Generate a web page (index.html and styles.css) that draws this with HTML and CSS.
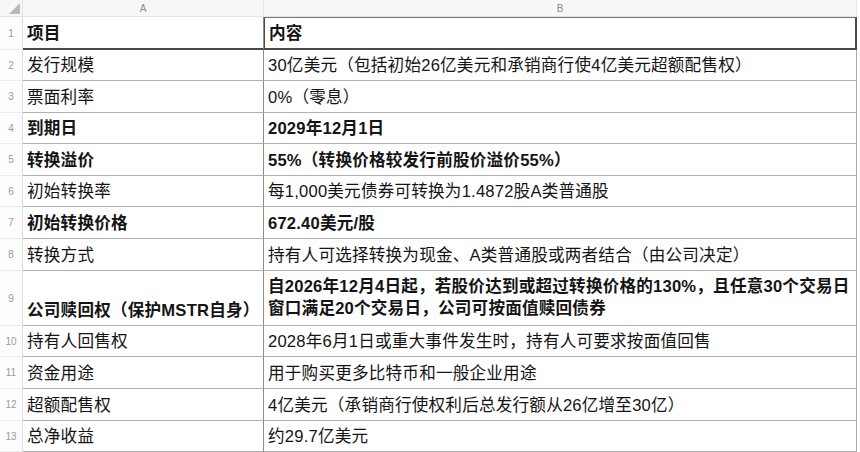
FILE: index.html
```html
<!DOCTYPE html>
<html lang="zh-CN">
<head>
<meta charset="utf-8">
<title>Sheet</title>
<link rel="stylesheet" href="styles.css">
</head>
<body>
<div class="sheet">
  <div class="hd corner"><svg class="tri" width="11" height="11" viewBox="0 0 11 11"><polygon points="11,0 11,11 0,11" fill="#b9b9b9"/></svg></div>
  <div class="hd col">A</div>
  <div class="hd col">B</div>

  <div class="num r1">1</div><div class="c a b1 bold">项目</div><div class="c sel bold">内容</div>
  <div class="num r2">2</div><div class="c a">发行规模</div><div class="c">30亿美元（包括初始26亿美元和承销商行使4亿美元超额配售权）</div>
  <div class="num">3</div><div class="c a">票面利率</div><div class="c">0%（零息）</div>
  <div class="num">4</div><div class="c a bold">到期日</div><div class="c bold">2029年12月1日</div>
  <div class="num">5</div><div class="c a bold">转换溢价</div><div class="c bold">55%（转换价格较发行前股价溢价55%）</div>
  <div class="num">6</div><div class="c a">初始转换率</div><div class="c">每1,000美元债券可转换为1.4872股A类普通股</div>
  <div class="num">7</div><div class="c a bold">初始转换价格</div><div class="c bold">672.40美元/股</div>
  <div class="num">8</div><div class="c a">转换方式</div><div class="c">持有人可选择转换为现金、A类普通股或两者结合（由公司决定）</div>
  <div class="num">9</div><div class="c a bold">公司赎回权（保护MSTR自身）</div><div class="c bold wrap"><span>自2026年12月4日起，若股价达到或超过转换价格的130%，且任意30个交易日<br>窗口满足20个交易日，公司可按面值赎回债券</span></div>
  <div class="num">10</div><div class="c a">持有人回售权</div><div class="c">2028年6月1日或重大事件发生时，持有人可要求按面值回售</div>
  <div class="num">11</div><div class="c a">资金用途</div><div class="c">用于购买更多比特币和一般企业用途</div>
  <div class="num">12</div><div class="c a">超额配售权</div><div class="c">4亿美元（承销商行使权利后总发行额从26亿增至30亿）</div>
  <div class="num">13</div><div class="c a">总净收益</div><div class="c">约29.7亿美元</div>
</div>
</body>
</html>
```

FILE: styles.css
```css
html, body {
  margin: 0;
  padding: 0;
  background: #ffffff;
}
body {
  font-family: "Liberation Sans", "Noto Sans CJK SC", sans-serif;
  color: #141414;
  overflow: hidden;
}
.sheet {
  display: grid;
  grid-template-columns: 23px 241px 593px;
  grid-template-rows: 17px 33px 31px 32px 31px 32px 31px 32px 32px 55px 31px 32px 32px 31px;
  width: 857px;
}
.hd {
  background: #f7f7f7;
  border-bottom: 1px solid #e3e3e3;
  border-right: 1px solid #e6e6e6;
  box-sizing: border-box;
  font-size: 10px;
  color: #8a8a8a;
  display: flex;
  align-items: center;
  justify-content: center;
}
.corner {
  justify-content: flex-start;
  align-items: flex-start;
  padding: 3px 0 0 9px;
}
.tri { display: block; }
.col:last-child { border-right: none; }
.num {
  box-sizing: border-box;
  border-right: 1px solid #dcdcdc;
  border-bottom: 1px solid #ededed;
  font-size: 10px;
  color: #9a9a9a;
  display: flex;
  align-items: center;
  justify-content: center;
  background: #fdfdfd;
}
.c {
  box-sizing: border-box;
  border-bottom: 1px solid #b0b0b0;
  border-right: 1px solid #a8a8a8;
  font-size: 16.6px;
  line-height: 22px;
  letter-spacing: 0.2px;
  padding: 0 4px 3px 4px;
  display: flex;
  align-items: flex-end;
  white-space: nowrap;
  overflow: hidden;
}
.a { border-right: 1px solid #8c8c8c; }
.bold { font-weight: bold; }
.wrap { padding-bottom: 5px; }
.b1 { border-bottom: 2px solid #4a4a4a; }
.sel {
  border: 2px solid #4a4a4a;
  border-left-width: 1px;
  border-top-color: #777;
  border-top-width: 1px;
}
```
